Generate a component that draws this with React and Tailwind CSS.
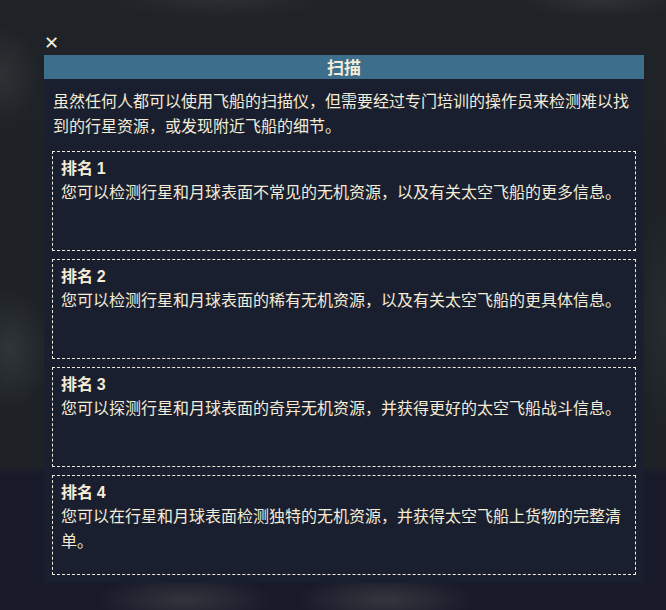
const ranks = [
  { rank: 1, text: '您可以检测行星和月球表面不常见的无机资源，以及有关太空飞船的更多信息。' },
  { rank: 2, text: '您可以检测行星和月球表面的稀有无机资源，以及有关太空飞船的更具体信息。' },
  { rank: 3, text: '您可以探测行星和月球表面的奇异无机资源，并获得更好的太空飞船战斗信息。' },
  { rank: 4, text: '您可以在行星和月球表面检测独特的无机资源，并获得太空飞船上货物的完整清单。' },
];

function RankCard({ rank, text }) {
  return (
    <div className="h-[100px] border border-dashed border-[#f2ecdc] px-2 pt-[5px]">
      <div className="text-[16px] leading-[21px] font-bold">
        排名 <span className="font-['Liberation_Sans',sans-serif]">{rank}</span>
      </div>
      <p className="text-[16px] leading-[25px]">{text}</p>
    </div>
  );
}

export default function App() {
  return (
    <div
      className="flex h-[610px] w-[666px] flex-col overflow-hidden pl-[44px] pt-[33px] font-['Noto_Sans_CJK_SC','Noto_Sans',sans-serif] text-[#f3ecd8]
        bg-[radial-gradient(ellipse_40px_50px_at_0px_75px,#2e3235,transparent),radial-gradient(ellipse_40px_60px_at_10px_350px,#30353a,transparent),radial-gradient(ellipse_30px_110px_at_666px_320px,#262d2f,transparent),radial-gradient(ellipse_90px_25px_at_185px_600px,#34343c,transparent),radial-gradient(ellipse_90px_25px_at_385px_600px,#36363d,transparent),radial-gradient(ellipse_110px_18px_at_220px_0px,#2b2f32,transparent),radial-gradient(ellipse_80px_18px_at_600px_0px,#2e3235,transparent),linear-gradient(to_bottom,#1f2327_0px,#1e2226_465px,#181a2a_475px,#181a2a_100%)]"
    >
      <button className="block h-[20px] w-[12px] text-[18px] leading-[20px] font-bold font-['DejaVu_Sans',sans-serif] text-[#f3ecd8]">
        ✕
      </button>
      <div className="mt-[2px] w-[600px] bg-[#1a1f2f]">
        <div className="h-[24px] bg-[#3d6e8c] text-center text-[17px] leading-[24px] font-bold">扫描</div>
        <div className="flex flex-col gap-[13px] px-2 pt-[9px] pb-[8px]">
          <p className="pl-px text-[16px] leading-[25px]">
            虽然任何人都可以使用飞船的扫描仪，但需要经过专门培训的操作员来检测难以找到的行星资源，或发现附近飞船的细节。
          </p>
          <div className="flex flex-col gap-[8px]">
            {ranks.map((r) => (
              <RankCard key={r.rank} {...r} />
            ))}
          </div>
        </div>
      </div>
    </div>
  );
}
